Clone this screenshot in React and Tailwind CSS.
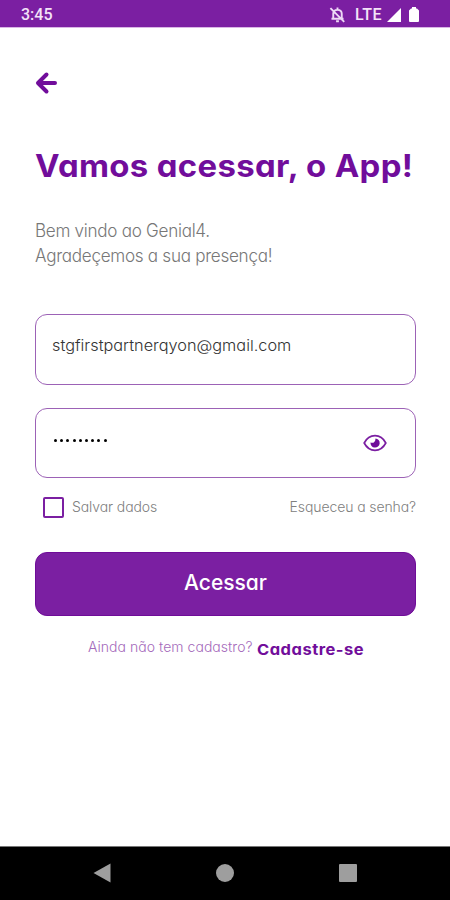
import { useState } from 'react'

const GEO = "font-['Inter',sans-serif] [font-feature-settings:'cv11']"
const THIN = "font-['Inter',sans-serif] font-light whitespace-nowrap [font-feature-settings:'cv11']"

function StatusBar() {
  return (
    <header className="flex h-[27px] shrink-0 items-center justify-between bg-[#7b1fa2] pl-[21px] pr-[31px] pt-[2px] text-white shadow-[0_1px_0_#d9b5e5]">
      <span className="font-['Roboto',sans-serif] text-[16px] font-medium leading-none text-[#f3e3f8]">3:45</span>
      <div className="flex items-center">
        <svg width="17" height="17" viewBox="0 0 24 24" fill="none" stroke="#edd8f5" strokeWidth="2.700">
          <path d="M6 18V11c0-3 2-5.500 6-5.500s6 2.500 6 5.500v7M3.500 18h17M12 2v3.500M10 21.500h4M2 3l19.500 19.500" />
        </svg>
        <span className="ml-[9px] mr-[1px] font-['Roboto',sans-serif] text-[16px] font-medium leading-none tracking-[0.500px] text-[#f3e3f8]">LTE</span>
        <svg className="ml-[4px]" width="14" height="14" viewBox="0 0 14 14" fill="white">
          <path d="M14 0v14H0z" />
        </svg>
        <svg className="ml-[8px]" width="10" height="15" viewBox="0 0 10 15" fill="white">
          <path d="M3 0h4v1.500h1l2 2v10.500q0 1-1 1H1q-1 0-1-1V3.500l2-2h1z" />
        </svg>
      </div>
    </header>
  )
}

function EyeIcon() {
  return (
    <svg width="24" height="18" viewBox="0 0 24 18" fill="none">
      <path d="M1.200 9Q5 1.700 12 1.700T22.800 9Q19 16.300 12 16.300T1.200 9Z" stroke="#7b1fa2" strokeWidth="1.700" />
      <path d="M12.500 4.400a4.600 4.600 0 1 1-5 4.100q2.500.8 3.800-.6T12.500 4.400Z" fill="#6f0c9a" />
    </svg>
  )
}

function NavBar() {
  return (
    <nav className="flex h-[54px] shrink-0 items-center justify-between border-t border-[#777] bg-black pb-[1px] pl-[93px] pr-[93px]">
      <svg width="18" height="20" viewBox="0 0 18 20" fill="#9e9e9e"><path d="M17.500 .5v19L.5 10z" /></svg>
      <span className="h-[18px] w-[18px] rounded-full bg-[#9e9e9e]" />
      <span className="h-[18px] w-[18px] rounded-[1px] bg-[#9e9e9e]" />
    </nav>
  )
}

export default function App() {
  const [email, setEmail] = useState('stgfirstpartnerqyon@gmail.com')

  return (
    <div className="flex h-[900px] w-[450px] flex-col overflow-hidden bg-white">
      <StatusBar />

      <main className="flex flex-1 flex-col pl-[35px] pr-[34px]">
        <button className="mt-[44px] h-[24px] w-[24px]" aria-label="Voltar">
          <svg width="24" height="24" viewBox="0 0 24 24" fill="none" stroke="#710d9b" strokeWidth="4" strokeLinecap="round" strokeLinejoin="round">
            <path d="M11.500 3.500L3 12l8.500 8.500M4 12h16" />
          </svg>
        </button>

        <h1 className={`mt-[50px] h-[42px] origin-left scale-x-[1.062] whitespace-nowrap text-[31px] font-bold leading-[42px] tracking-[0.300px] text-[#710d9b] ${GEO}`}>
          Vamos acessar, o App!
        </h1>

        <p className={`mt-[31px] h-[50px] origin-left scale-x-[0.950] text-[18px] leading-[25px] tracking-[-0.300px] text-[#777] ${THIN}`}>
          Bem vindo ao Genial4.
          <br />
          Agradeçemos a sua presença!
        </p>

        <div className="mt-[46px] h-[71px] rounded-[12px] border border-[#9c62b6] px-[16px]">
          <input
            value={email}
            onChange={e => setEmail(e.target.value)}
            className={`h-[61px] w-full origin-left scale-x-[1.086] bg-transparent text-[15px] font-[350] text-[#333] outline-none ${GEO}`}
          />
        </div>

        <div className="mt-[23px] flex h-[70px] items-center justify-between rounded-[12px] border border-[#9c62b6] pl-[18px] pr-[28px]">
          <div className="mb-[6px] flex gap-[3.200px]">
            {Array.from({ length: 9 }, (_, i) => (
              <span key={i} className="h-[3px] w-[3px] rounded-full bg-black" />
            ))}
          </div>
          <EyeIcon />
        </div>

        <div className="mt-[18px] flex h-[22px] items-center">
          <span className="ml-[8px] h-[21px] w-[21px] rounded-[2px] border-2 border-[#7b1fa2]" />
          <span className={`mb-[2px] ml-[8px] text-[14px] tracking-[-0.100px] text-[#808080] ${THIN}`}>Salvar dados</span>
          <span className={`mb-[2px] ml-auto text-[14px] tracking-[-0.100px] text-[#808080] ${THIN}`}>Esqueceu a senha?</span>
        </div>

        <button className={`mt-[34px] h-[64px] shrink-0 rounded-[12px] border border-[#6f0c98] bg-[#7b1fa2] pb-[3px] text-[21px] font-medium text-white ${GEO}`}>
          Acessar
        </button>

        <div className="mt-[20px] flex h-[26px] items-start pl-[53px]">
          <span className={`text-[14px] leading-[22px] tracking-[0.040px] text-[#a56abb] ${THIN}`}>Ainda não tem cadastro?</span>
          <span className={`ml-[4px] origin-left scale-x-[1.100] whitespace-nowrap text-[15px] font-bold leading-[28px] tracking-[0.450px] text-[#710d9b] ${GEO}`}>Cadastre-se</span>
        </div>
      </main>

      <NavBar />
    </div>
  )
}
